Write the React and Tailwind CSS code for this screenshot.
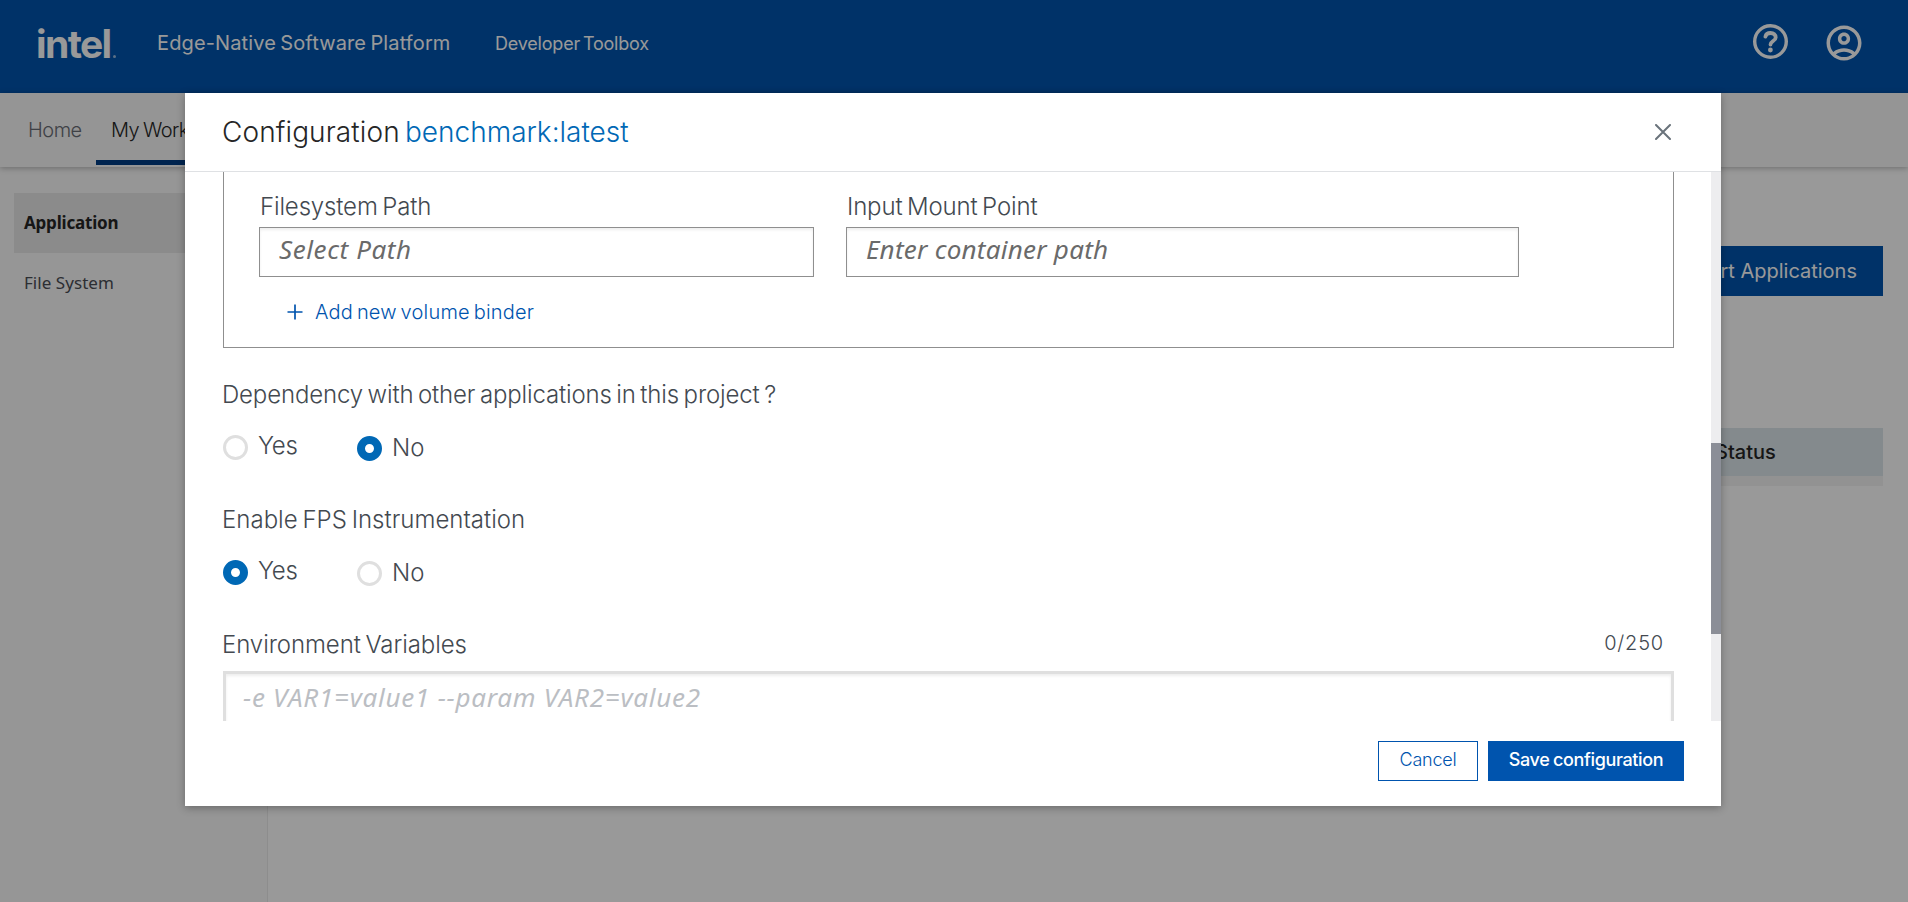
import React from "react";
import { MdOutlineAccountCircle } from "react-icons/md";

function HelpIcon({ className }) {
  return (
    <svg className={className} viewBox="0 0 35 35" fill="none" stroke="currentColor" strokeLinecap="round" strokeLinejoin="round">
      <circle cx="17.5" cy="17.5" r="15.8" strokeWidth="3.4" />
      <path d="M12.4 12.6C13 10 15 9 17.5 9c3.2 0 5.2 1.8 5.2 4.4 0 3.6-5.2 3.6-5.2 7.2" strokeWidth="3.8" />
      <circle cx="17.4" cy="26" r="2.4" fill="currentColor" stroke="none" />
    </svg>
  );
}

function Header() {
  return (
    <header className="flex h-[93px] shrink-0 items-start bg-[#0054ae] text-white">
      <div className="ml-9 mt-[20px] flex w-[121px] items-end leading-[48px]">
        <span className="w-[76px] text-[39px] font-bold tracking-[-1.6px]">intel</span>
        <span className="mb-[10px] ml-px size-[3px] rounded-full bg-white/60" />
      </div>
      <span className="mt-[29px] w-[338px] text-xl leading-7 tracking-[0.13px] [word-spacing:-1.5px]">
        Edge-Native Software Platform
      </span>
      <span className="mt-[32px] text-lg leading-6 tracking-[-0.2px] [word-spacing:-2px]">Developer Toolbox</span>
      <div className="ml-auto flex items-start pr-[43px]">
        <HelpIcon className="mt-6 size-[35px]" />
        <MdOutlineAccountCircle className="ml-[35px] mt-[22px] size-[42px]" />
      </div>
    </header>
  );
}

function Nav() {
  return (
    <nav className="relative z-10 flex h-[74px] shrink-0 items-start bg-[#f8f8f8] text-xl leading-7 font-[350] shadow-[0_1px_6px_rgba(0,0,0,0.3)]">
      <span className="mt-[23px] w-[96px] pl-[28px] tracking-[-0.5px] text-[#6a6d75]">Home</span>
      <span className="flex h-[72px] items-start border-b-[5px] border-[#003c84] px-[15px] pt-[23px] tracking-[-0.6px] [word-spacing:-1px] text-[#262626]">
        My Workspace
      </span>
    </nav>
  );
}

function Sidebar() {
  return (
    <aside className="w-[268px] shrink-0 border-r border-[#ececec] bg-[#fafafa] pl-[14px] pt-[26px] font-['Noto_Sans',sans-serif] text-[17px]">
      <div className="flex h-[60px] items-center bg-[#e8e8e8] pl-[10px] font-bold tracking-[-0.2px] text-[#262626]">
        Application
      </div>
      <div className="flex h-[60px] items-center pl-[10px] tracking-[0.05px] text-[#4a4d55]">
        File System
      </div>
    </aside>
  );
}

function Content() {
  return (
    <section className="flex grow flex-col bg-white pr-[25px] pl-6">
      <button className="mt-[79px] h-[50px] self-end bg-[#0054ae] px-[26px] text-xl text-white">
        Import Applications
      </button>
      <div className="mt-[132px] flex h-12 items-center bg-[#dde6eb] pl-6 text-xl font-medium text-[#262626]">
        <span className="ml-auto w-[168px]">Status</span>
      </div>
      <div className="h-[10px] bg-[#f4f4f4]" />
    </section>
  );
}

function Radio({ label, checked, second }) {
  return (
    <label className={second ? "flex items-start pt-px" : "flex w-[134px] items-start"}>
      <span
        className={
          checked
            ? "size-[25px] rounded-full border-8 border-[#0068b5] bg-white"
            : "size-[25px] rounded-full border-[3px] border-[#dfdfdf] bg-white"
        }
      />
      <span className={second ? "-mt-[4px] pl-[10px]" : "-mt-[5px] pl-[10px] tracking-[-0.3px]"}>{label}</span>
    </label>
  );
}

function YesNo({ value }) {
  return (
    <div className="mt-[24px] flex h-[26px] items-start">
      <Radio label="Yes" checked={value === "yes"} />
      <Radio label="No" checked={value === "no"} second />
    </div>
  );
}

function PathField({ label, placeholder, className, textClass }) {
  return (
    <div className={className}>
      <div className="pl-px leading-8 tracking-[-0.15px] [word-spacing:-2px]">{label}</div>
      <div className="mt-[4px] h-[50px] border border-[#8f8f8f] pt-[5px] pl-[19px] font-['Noto_Sans',sans-serif] text-[26px] leading-8 font-normal text-[#6a6a6a] italic shadow-[inset_0_2px_3px_rgba(0,0,0,0.07)]">
        <span className={textClass}>{placeholder}</span>
      </div>
    </div>
  );
}

function Modal() {
  return (
    <div className="flex h-[713px] w-[1536px] flex-col bg-white shadow-[0_2px_8px_rgba(0,0,0,0.3)]">
      <div className="flex h-[79px] shrink-0 items-start border-b border-[#dfe1e4] pl-[37px] text-[28px] leading-9 font-[350]">
        <h2 className="mt-[21px] w-[183px] tracking-[0.1px] text-[#262626]">Configuration</h2>
        <span className="mt-[21px] text-[#0068b5]">benchmark:latest</span>
        <svg className="mt-[31px] mr-[50px] ml-auto size-4" viewBox="0 0 16 16" fill="none" stroke="#6a737b" strokeWidth="2" strokeLinecap="round">
          <path d="M1 1 15 15M15 1 1 15" />
        </svg>
      </div>

      <div className="flex h-[549px] shrink-0 overflow-hidden">
        <div className="w-[1526px] shrink-0 pl-[38px] text-2xl leading-8 font-[350] text-[#434950]">
          <div className="h-[176px] w-[1451px] border-x border-b border-[#8f8f8f] pt-[19px] pl-[35px]">
            <div className="flex gap-8">
              <PathField label="Filesystem Path" placeholder="Select Path" className="w-[555px]" textClass="tracking-[0.6px]" />
              <PathField label="Input Mount Point" placeholder="Enter container path" className="w-[673px]" textClass="tracking-[0.25px]" />
            </div>
            <div className="mt-[21px] flex h-7 items-center pl-[28px] text-xl leading-7 text-[#0054ae]">
              <svg className="size-4" viewBox="0 0 16 16" fill="none" stroke="currentColor" strokeWidth="1.7">
                <path d="M8 0.5v15M0.5 8h15" />
              </svg>
              <span className="pl-[12px] tracking-[0.2px] [word-spacing:-2px]">Add new volume binder</span>
            </div>
          </div>

          <div className="mt-[31px] -ml-px tracking-[-0.15px] [word-spacing:-2px]">
            Dependency with other applications in this project ?
          </div>
          <YesNo value="no" />
          <div className="mt-[43px] -ml-px tracking-[0.02px] [word-spacing:-2px]">Enable FPS Instrumentation</div>
          <YesNo value="yes" />
          <div className="mt-[43px] -ml-px flex w-[1452px] items-start justify-between">
            <span className="tracking-[-0.08px] [word-spacing:-2px]">Environment Variables</span>
            <span className="pr-[10px] text-xl leading-7 tracking-[0.8px]">0/250</span>
          </div>
          <div className="mt-[10px] h-[120px] w-[1451px] border-[3px] border-[#dfdfdf] pt-[7px] pl-[17px] font-['Noto_Sans',sans-serif] text-[26px] leading-8 font-normal tracking-[0.75px] text-[#bbbec3] italic shadow-[inset_0_2px_3px_rgba(0,0,0,0.07)]">
            -e VAR1=value1 --param VAR2=value2
          </div>
        </div>
        <div className="h-full w-[10px] bg-[#ededef] pt-[271px]">
          <div className="h-[191px] bg-[#8b8e97]" />
        </div>
      </div>

      <div className="flex items-start justify-end gap-[10px] pt-5 pr-[37px] text-lg leading-6">
        <button className="h-10 w-[100px] border border-[#0054ae] pb-[2px] font-[350] tracking-[-0.25px] text-[#0054ae]">Cancel</button>
        <button className="h-10 w-[196px] bg-[#0054ae] pb-[2px] font-medium tracking-[-0.35px] [word-spacing:-1px] text-white">
          Save configuration
        </button>
      </div>
    </div>
  );
}

export default function App() {
  return (
    <div className="relative flex h-[902px] w-[1908px] flex-col overflow-hidden bg-white font-['Inter',sans-serif]">
      <Header />
      <Nav />
      <main className="flex grow">
        <Sidebar />
        <Content />
      </main>
      <div className="absolute inset-0 z-20 flex items-start bg-black/40 pt-[93px] pl-[185px]">
        <Modal />
      </div>
    </div>
  );
}
